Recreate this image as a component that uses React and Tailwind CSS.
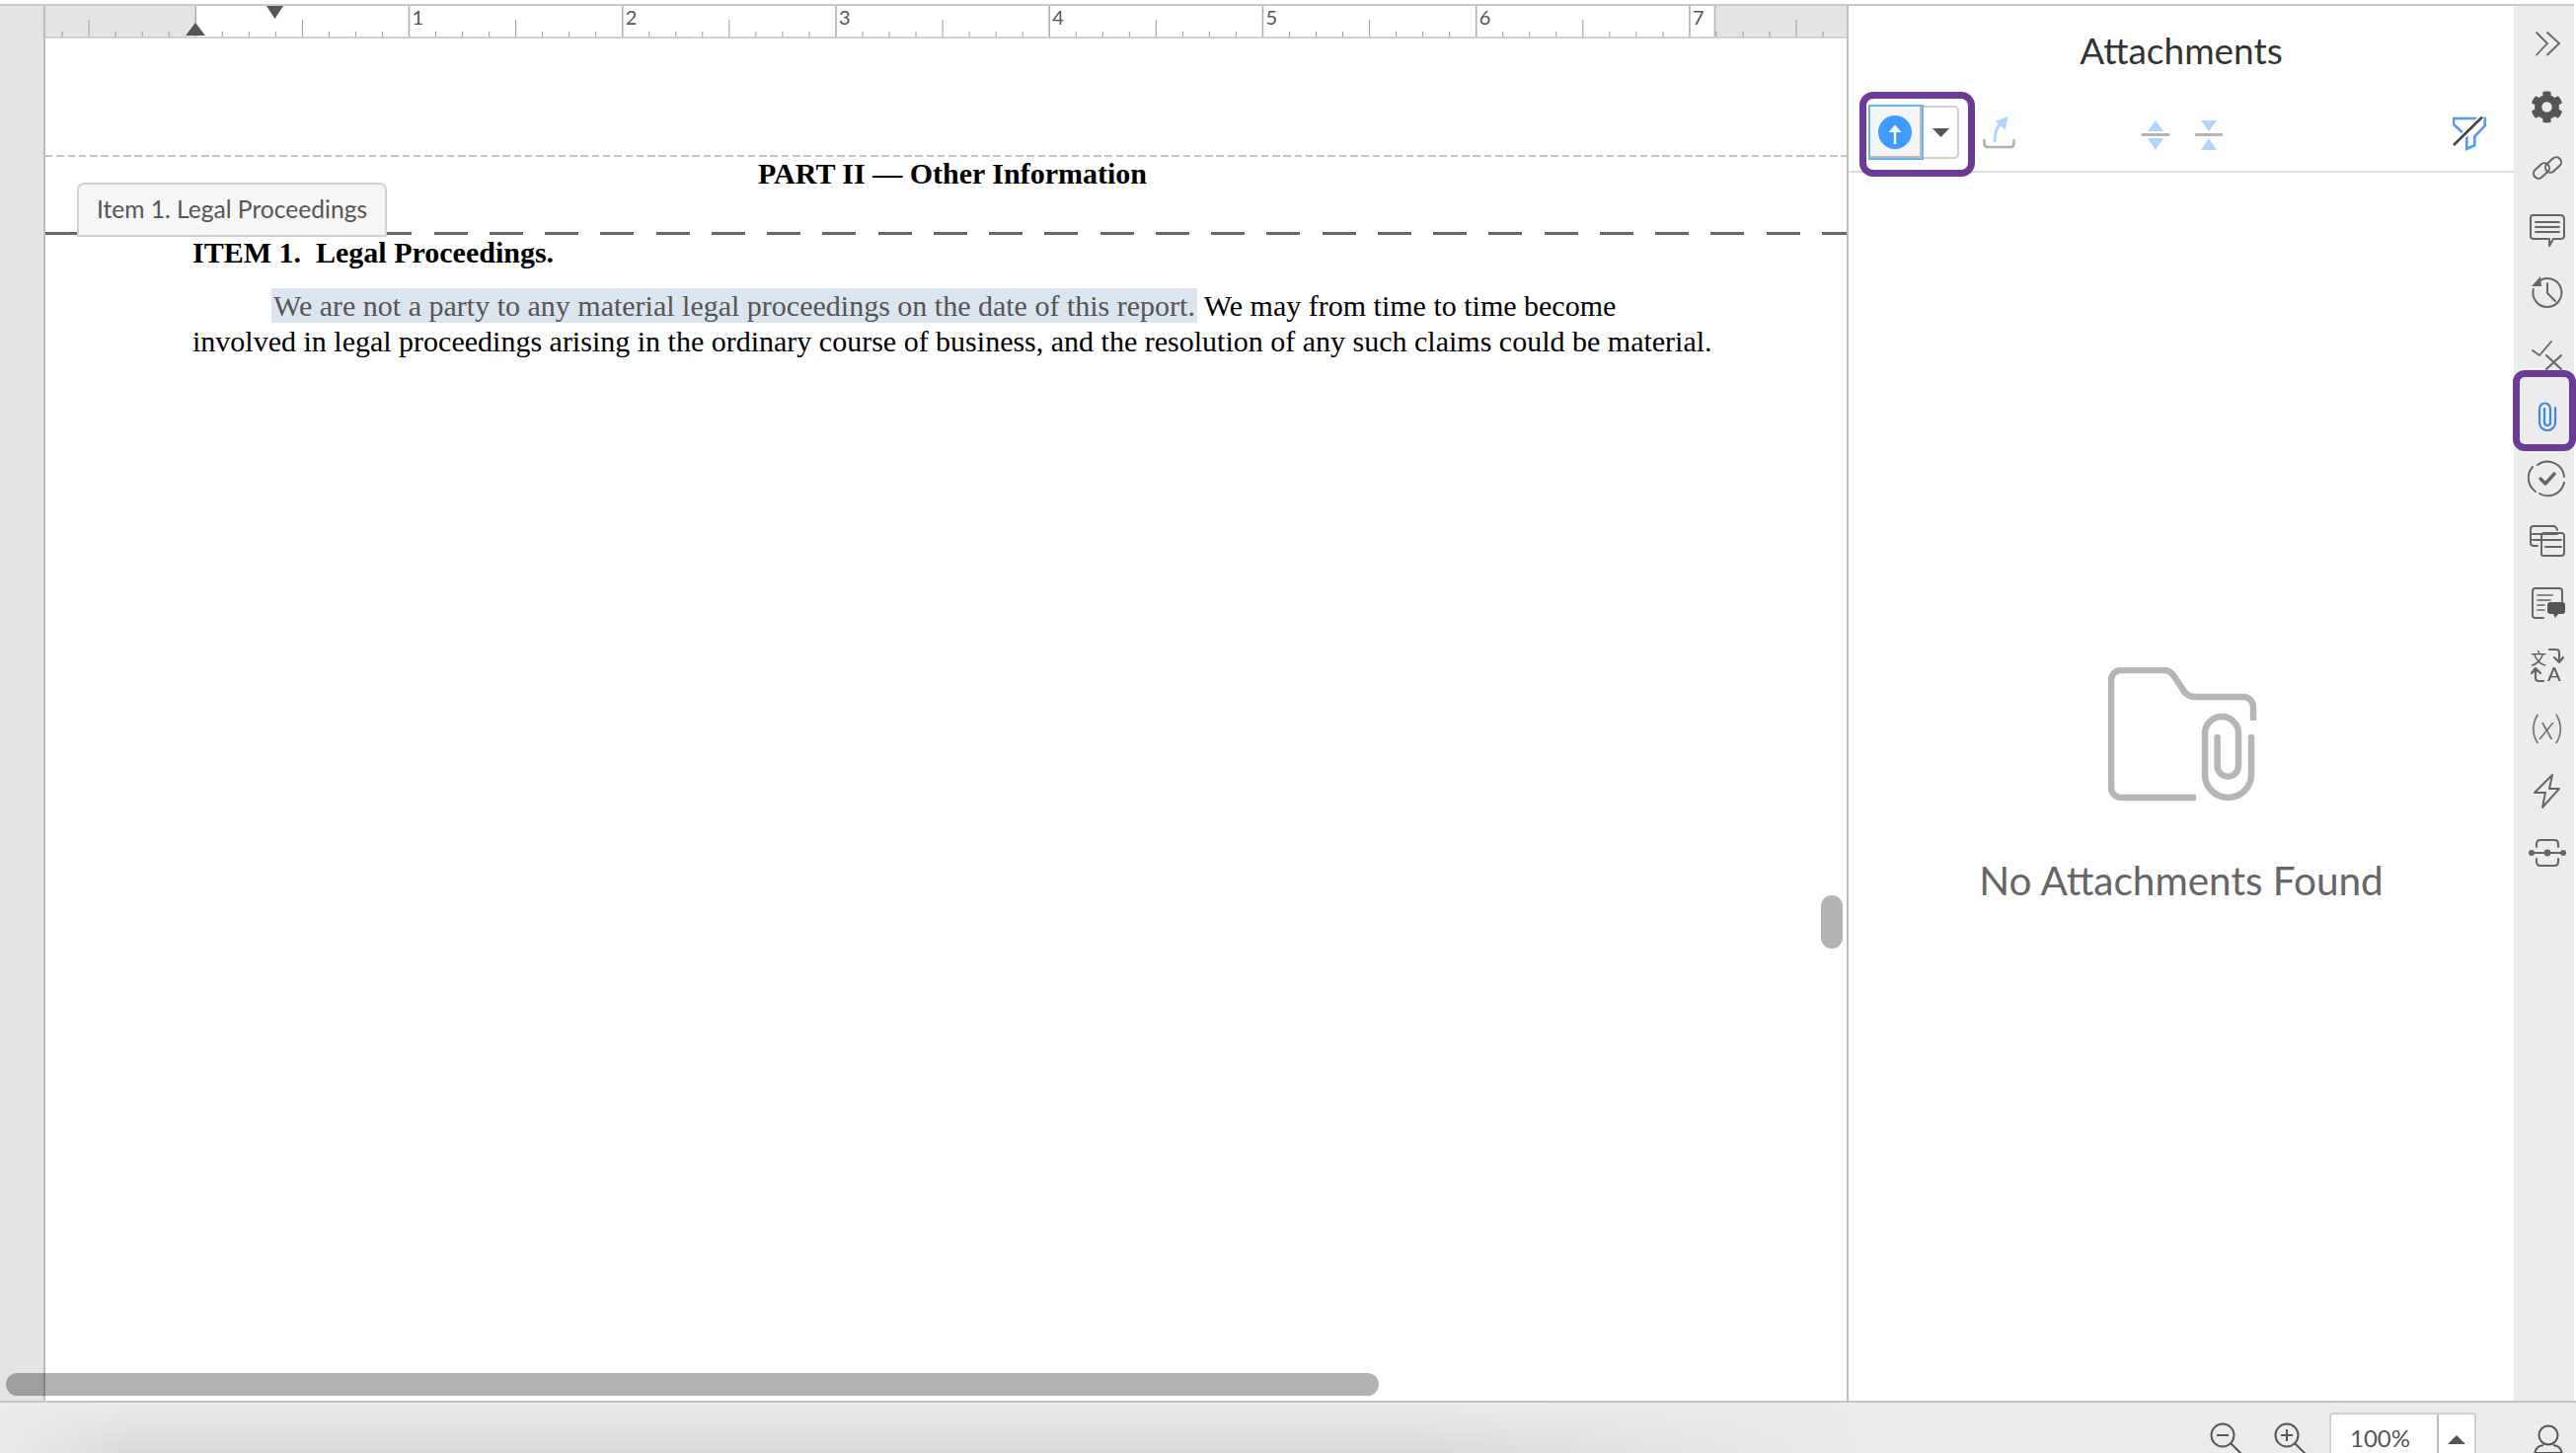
import React from "react";
import { FaCog } from "react-icons/fa";

const ticks = [];
for (let k = -5; k <= 61; k++) ticks.push(k);

function Ruler() {
  const originX = 152.25;
  const step = 27.03;
  return (
    <svg width="1827" height="31" viewBox="0 0 1827 31" overflow="visible" className="block shrink-0">
      <rect x="0" y="0" width="152" height="31" fill="#e4e4e4" />
      <rect x="1691" y="0" width="136" height="31" fill="#e4e4e4" />
      {ticks.map((k) => {
        const x = originX + k * step;
        const major = k % 8 === 0;
        const mid = ((k % 4) + 4) % 4 === 0;
        return (
          <line
            key={k}
            x1={x}
            x2={x}
            y1={major ? 0 : mid ? 14 : 26}
            y2={31}
            stroke={major ? "#b0b0b0" : "#9a9a9a"}
            strokeWidth={major ? 1.6 : 1}
          />
        );
      })}
      <line x1="1691.5" x2="1691.5" y1="0" y2="31" stroke="#b0b0b0" strokeWidth="1.6" />
      {[1, 2, 3, 4, 5, 6, 7].map((n) => (
        <text key={n} x={originX + n * 216.25 + 3} y="19" fontSize="20" fill="#555" fontFamily="Lato, sans-serif">
          {n}
        </text>
      ))}
      <polygon points="142,30 162,30 152,17" fill="#555" />
      <polygon points="224,0 241,0 232.5,13" fill="#555" />
    </svg>
  );
}

const S = "#666";
function I({ children }) {
  return (
    <svg width="40" height="40" viewBox="0 0 40 40" fill="none" stroke={S} strokeWidth="2" strokeLinecap="round" strokeLinejoin="round">
      {children}
    </svg>
  );
}

function SideItem({ children }) {
  return <div className="h-[63.1px] w-full flex items-center justify-center shrink-0">{children}</div>;
}

function Sidebar() {
  return (
    <div className="w-[61px] shrink-0 bg-[#ececec] flex flex-col pt-[6px] pl-[6px] overflow-hidden">
      <SideItem>
        <I>
          <path d="M9 9 L20 20 L9 31.5 M20 9 L32 20 L20 31.5" strokeWidth="1.8" strokeLinejoin="miter" />
        </I>
      </SideItem>
      <SideItem>
        <div className="pt-[3px]">
          <FaCog className="w-[33px] h-[33px] text-[#555]" />
        </div>
      </SideItem>
      <SideItem>
        <I>
          <rect x="5" y="18" width="18" height="10" rx="5" transform="rotate(-42 14 23)" />
          <rect x="17" y="12" width="18" height="10" rx="5" transform="rotate(-42 26 17)" />
        </I>
      </SideItem>
      <SideItem>
        <div className="pt-[2px]">
          <I>
            <path d="M5 5 H33 Q37 5 37 9 V26 Q37 29 33 29 H26 L22 36 L22 29 H6 Q3 29 3 26 V8 Q3 5 5 5 Z" transform="translate(0 -1)" />
            <path d="M8 11 H32 M8 16 H32 M8 21 H32" strokeWidth="1.8" />
          </I>
        </div>
      </SideItem>
      <SideItem>
        <I>
          <path d="M11 9 A14.5 14.5 0 1 1 5.8 17" />
          <path d="M20 11 V21 L28 29" strokeWidth="2" />
          <polygon points="4,14 14,14 13,4" fill={S} stroke="none" />
        </I>
      </SideItem>
      <SideItem>
        <I>
          <path d="M5 16 L12 21 L24 7" strokeWidth="1.8" />
          <path d="M19 21 L34 35 M34 21 L19 35" strokeWidth="2" />
        </I>
      </SideItem>
      <SideItem>
        <svg width="22" height="34" viewBox="0 0 22 34" fill="none" stroke="#3f86dd" strokeWidth="2.2" strokeLinecap="round">
          <path d="M19 8 V23 A8 8 0 0 1 3 23 V9 A5.5 5.5 0 0 1 14 9 V23 A3 3 0 0 1 8 23 V9" />
        </svg>
      </SideItem>
      <SideItem>
        <I>
          <path d="M10 6 A17 17 0 0 1 37 18 M37 24 A17 17 0 0 1 12 35 M8 33 A17 17 0 0 1 5 8" />
          <path d="M13 20 L18 25 L27 15" strokeWidth="3.4" />
        </I>
      </SideItem>
      <SideItem>
        <I>
          <path d="M10 25 H6 Q3 25 3 22 V8 Q3 5 6 5 H26 Q29 5 30 9" />
          <path d="M14 33 V15 Q14 12 17 12 H34 Q37 12 37 15 V32 Q37 35 34 35 H16 Q14 35 14 33 Z" />
          <path d="M5 13 H30 M5 19 H34 M18 26 H34" />
        </I>
      </SideItem>
      <SideItem>
        <I>
          <path d="M16 35 H8 Q5 35 5 32 V8 Q5 5 8 5 H32 Q35 5 35 8 V18" />
          <path d="M10 12 H25 M10 17 H23 M10 22 H17 M10 27 H17" strokeWidth="1.7" />
          <path d="M20 22 Q20 19 23 19 H35 Q38 19 38 22 V28 Q38 31 35 31 H31 L28 35 L26 31 H23 Q20 31 20 28 Z" fill="#555" stroke="none" />
        </I>
      </SideItem>
      <SideItem>
        <svg width="36" height="40" viewBox="0 0 36 40" overflow="visible" fill="none" stroke={S} strokeWidth="2" strokeLinecap="round" strokeLinejoin="round">
          <text x="1" y="19" fontSize="16" fill="#555" stroke="none" fontFamily="'Noto Sans CJK SC', sans-serif">文</text>
          <text x="18" y="36" fontSize="20" fill="#555" stroke="none" fontFamily="Lato, sans-serif">A</text>
          <path d="M20 4 H27 Q30 4 30 8 V16 M25 12 L30 17 L34 12" strokeWidth="2.2" />
          <path d="M14 36 H9 Q6 36 6 32 V24 M2 28 L6 23 L11 28" strokeWidth="2.2" />
        </svg>
      </SideItem>
      <SideItem>
        <div className="text-[#666] text-[34px] leading-none font-['Lato',sans-serif] font-light mt-[-3px]">
          (<span className="italic">x</span>)
        </div>
      </SideItem>
      <SideItem>
        <I>
          <path d="M25 4 L7 22 H18 L15 37 L32 18 H22 Z" strokeWidth="2" />
        </I>
      </SideItem>
      <SideItem>
        <I>
          <path d="M9 14 V11 Q9 7 13 7 H27 Q31 7 31 11 V14" />
          <path d="M9 26 V29 Q9 33 13 33 H27 Q31 33 31 29 V26" />
          <path d="M3 20 H37" />
          <circle cx="4" cy="20" r="3" fill={S} stroke="none" />
          <circle cx="20" cy="20" r="3.4" fill={S} stroke="none" />
          <circle cx="36" cy="20" r="3" fill={S} stroke="none" />
        </I>
      </SideItem>
    </div>
  );
}

function Toolbar() {
  return (
    <div className="h-[82px] border-b-2 border-[#dcdcdc] flex items-start relative pt-[13px] shrink-0">
      <div className="ml-[20px] w-[92px] h-[56px] flex">
        <div className="w-[56px] h-[56px] pr-[3px] bg-[#f5f5f5] border-2 border-[#66b3f5] shadow-[inset_-2px_-2px_0_#bbbbbb] flex items-center justify-center">
          <svg width="34" height="34" viewBox="0 0 34 34">
            <circle cx="17" cy="17" r="17" fill="#3f9bff" />
            <path d="M17 29 V14" stroke="#fff" strokeWidth="2.4" />
            <polygon points="17,9.5 10.5,17 23.5,17" fill="#fff" />
          </svg>
        </div>
        <div className="w-[36px] h-[54px] mt-[1px] border-2 border-l-0 border-[#cfcfcf] rounded-r-[5px] flex items-center justify-center">
          <svg width="17" height="9" viewBox="0 0 17 9">
            <polygon points="0,0 17,0 8.5,9" fill="#555" />
          </svg>
        </div>
      </div>
      <div className="ml-[24px] mt-[12px]">
        <svg width="33" height="34" viewBox="0 0 33 34" fill="none" strokeLinecap="round">
          <path d="M1.5 24 V27 Q1.5 31 5 31 H28 Q31.5 31 31.5 27 V24" stroke="#b0b0b0" strokeWidth="2.6" />
          <path d="M12 25 Q12 14 17 8" stroke="#b3d4fc" strokeWidth="3" />
          <polygon points="26,0 12.7,4.7 22.7,13.7" fill="#b3d4fc" />
        </svg>
      </div>
      <div className="ml-[128px] mt-[16px]">
        <svg width="28" height="30" viewBox="0 0 28 30">
          <polygon points="14,0 6,11 22,11" fill="#b3d4fc" />
          <rect x="0" y="13" width="28" height="3" fill="#b5b5b5" />
          <polygon points="6,18 22,18 14,30" fill="#b3d4fc" />
        </svg>
      </div>
      <div className="ml-[26px] mt-[16px]">
        <svg width="28" height="30" viewBox="0 0 28 30">
          <polygon points="6,0 22,0 14,11" fill="#b3d4fc" />
          <rect x="0" y="13" width="28" height="3" fill="#b5b5b5" />
          <polygon points="14,18 6,30 22,30" fill="#b3d4fc" />
        </svg>
      </div>
      <div className="ml-[233px] mt-[12px]">
        <svg width="34" height="36" viewBox="0 0 34 36" fill="none">
          <path d="M1 2 H32.7 V9.3 L22.3 20.3 V29.3 L14.3 32.7 V20.3 L1 8 Z" stroke="#4d9cf0" strokeWidth="2.6" strokeLinejoin="miter" />
          <path d="M1 29 L30 0.5" stroke="#fff" strokeWidth="6" />
          <path d="M1 29 L30 0.5" stroke="#444" strokeWidth="2.6" />
        </svg>
      </div>
      <div className="absolute left-[11px] top-[0px] w-[117px] h-[86px] border-[7px] border-[#6c3b96] rounded-[14px]" />
    </div>
  );
}

function EmptyState() {
  return (
    <div className="flex flex-col items-center">
      <svg width="151" height="137" viewBox="0 0 151 137" fill="none" stroke="#b6b6b6" strokeWidth="6.5" className="mt-[501px] ml-[2px]">
        <path d="M89 132 H13 A10 10 0 0 1 3 122 V13 A10 10 0 0 1 13 3 H57 Q62 3 66 8 L74 20 Q79 30 88 30 H137 A10 10 0 0 1 147 40 V54" />
        <path d="M145 71 V108.5 A23.5 23.5 0 0 1 98 108.5 V67 A17 17 0 0 1 132 67 V100 A10.7 10.7 0 0 1 110.6 100 V71" strokeLinecap="round" />
      </svg>
      <div className="mt-[55px] text-[40.5px] leading-[48px] text-[#666] font-['Lato',sans-serif] whitespace-nowrap">No Attachments Found</div>
    </div>
  );
}

function Panel() {
  return (
    <div className="w-[674px] shrink-0 bg-white flex flex-col">
      <div className="h-[87px] pt-[21px] text-center text-[37px] leading-[48px] text-[#333] font-['Lato',sans-serif] shrink-0">Attachments</div>
      <Toolbar />
      <EmptyState />
    </div>
  );
}

function Doc() {
  return (
    <div className="w-[1827px] shrink-0 border-r-2 border-[#bdbdbd] flex flex-col relative overflow-hidden">
      <Ruler />
      <div className="border-t-2 border-[#d0d0d0]" />
      <div className="h-[118px] shrink-0" />
      <div className="h-[2px] shrink-0 bg-[repeating-linear-gradient(to_right,#c4c4c4_0,#c4c4c4_7.5px,transparent_7.5px,transparent_11.3px)]" />
      <div className="pl-[149px] w-[1689px] font-['Liberation_Serif',serif] text-black text-[30px] leading-[36px]">
        <div className="text-center font-bold h-[36px] mt-[-1px]">PART II — Other Information</div>
      </div>
      <div className="relative h-[3px] mt-[41px] shrink-0 bg-[repeating-linear-gradient(to_right,#666666_0,#666666_34px,transparent_34px,transparent_56.25px)]">
        <div className="absolute left-[32px] top-[-50px] w-[314px] h-[55px] bg-[#f6f6f6] border-2 border-[#d2d2d2] rounded-t-[7px] flex items-center justify-center text-[24.6px] text-[#555] font-['Lato',sans-serif] whitespace-nowrap">
          Item 1. Legal Proceedings
        </div>
      </div>
      <div className="pl-[149px] w-[1689px] font-['Liberation_Serif',serif] text-black text-[30px] leading-[36px] whitespace-nowrap">
        <div className="font-bold h-[36px] whitespace-pre">ITEM 1.  Legal Proceedings.</div>
        <div className="mt-[18px] pl-[80px]">
          <span className="bg-[#dbe5f0] text-[#555] py-[1px] px-[2px]">We are not a party to any material legal proceedings on the date of this report.</span> We may from time to time become
        </div>
        <div>involved in legal proceedings arising in the ordinary course of business, and the resolution of any such claims could be material.</div>
      </div>
      <div className="absolute left-[1799px] top-[901px] w-[22px] h-[54px] rounded-full bg-[#b3b3b3]" />
    </div>
  );
}

function StatusBar() {
  return (
    <div className="h-[53px] shrink-0 border-t-2 border-[#c4c4c4] overflow-hidden flex items-start bg-[linear-gradient(to_right,#ececec_0%,transparent_5%,transparent_55%,#ececec_72%),linear-gradient(to_bottom,#ececec,#d8d8d8)]">
      <div className="ml-[2239px] mt-[20px]">
        <svg width="34" height="34" viewBox="0 0 34 34" fill="none" stroke="#555" strokeWidth="2">
          <circle cx="13" cy="13" r="11.5" />
          <path d="M7 13 H19 M21 21 L33 33" />
        </svg>
      </div>
      <div className="ml-[31px] mt-[20px]">
        <svg width="34" height="34" viewBox="0 0 34 34" fill="none" stroke="#555" strokeWidth="2">
          <circle cx="13" cy="13" r="11.5" />
          <path d="M7 13 H19 M13 7 V19 M21 21 L33 33" />
        </svg>
      </div>
      <div className="ml-[22px] mt-[10px] w-[149px] h-[60px] bg-white border-2 border-[#cfcfcf] rounded-t-[4px] flex">
        <div className="w-[109px] pr-[8px] pt-[9px] text-center text-[24px] leading-[30px] text-[#555] font-['Lato',sans-serif] border-r-2 border-[#bdbdbd]">100%</div>
        <div className="flex-1 flex justify-center pt-[21px]">
          <svg width="18" height="9" viewBox="0 0 18 9">
            <polygon points="9,0 18,9 0,9" fill="#555" />
          </svg>
        </div>
      </div>
      <div className="ml-[58px] mt-[22px]">
        <svg width="30" height="34" viewBox="0 0 30 34" fill="none" stroke="#555" strokeWidth="2">
          <circle cx="15" cy="11" r="9.5" />
          <path d="M1 32 Q1 22 10 21 M29 32 Q29 22 20 21 M1 29 H29" />
        </svg>
      </div>
    </div>
  );
}

export default function App() {
  return (
    <div className="relative w-[2610px] h-[1472px] bg-white overflow-hidden flex flex-col">
      <div className="h-[4px] shrink-0 bg-white" />
      <div className="h-[2px] shrink-0 bg-[#c8c8c8] mr-[2px]" />
      <div className="h-[1413px] shrink-0 flex mr-[2px]">
        <div className="w-[46px] shrink-0 bg-[#e4e4e4] border-r-2 border-[#bdbdbd]" />
        <Doc />
        <Panel />
        <Sidebar />
      </div>
      <StatusBar />
      <div className="absolute left-[6px] top-[1391px] w-[1391px] h-[23px] rounded-full bg-black/30" />
      <div className="absolute left-[2546px] top-[375px] w-[64px] h-[82px] border-[7px] border-[#6c3b96] rounded-[12px]" />
    </div>
  );
}
